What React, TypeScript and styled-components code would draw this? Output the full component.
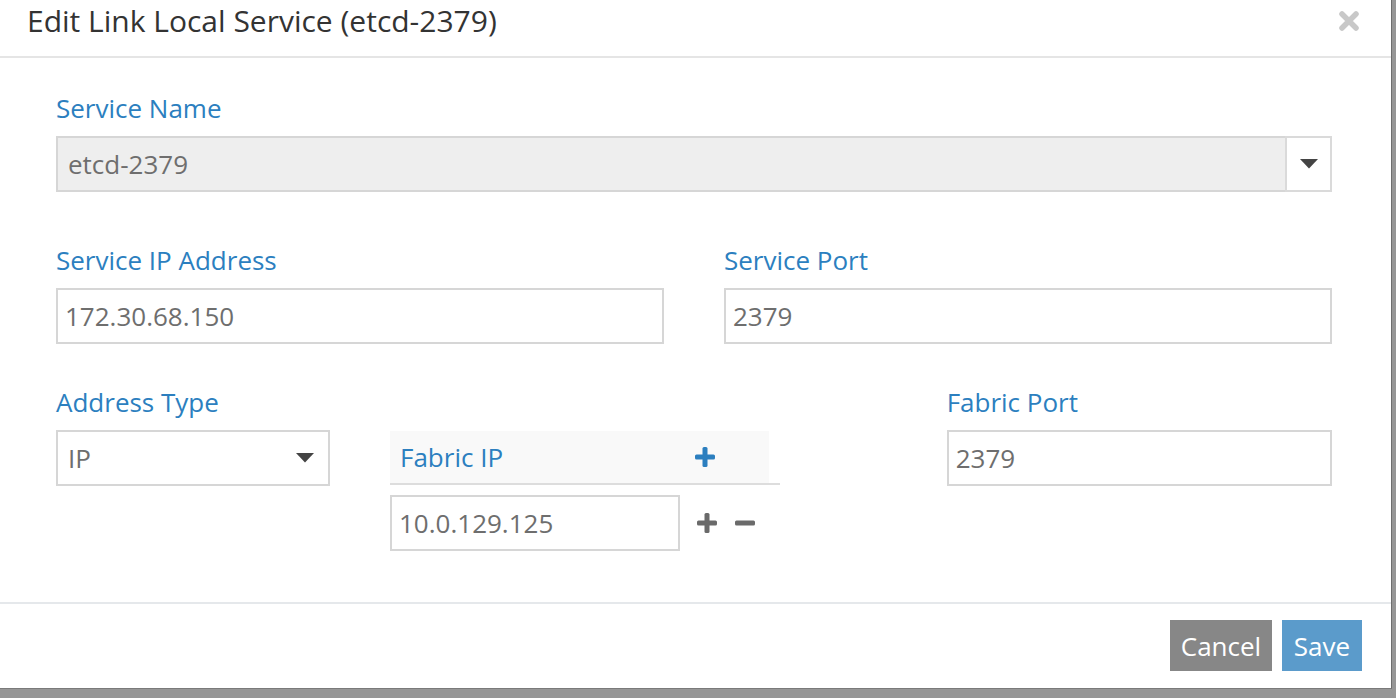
import React from "react";
import styled, { createGlobalStyle } from "styled-components";

const GlobalStyle = createGlobalStyle`
  html, body { margin: 0; padding: 0; }
  body {
    background: #969696;
    font-family: "Open Sans", "Liberation Sans", sans-serif;
    overflow: hidden;
    width: 1396px;
    height: 698px;
  }
  * { box-sizing: border-box; }
`;

const Modal = styled.div`
  width: 1392px;
  height: 689px;
  background: #ffffff;
  border-right: 1px solid #6e6e6e;
  border-bottom: 1px solid #7a7a7a;
  display: flex;
  flex-direction: column;
`;

const Header = styled.div`
  height: 58px;
  flex: none;
  border-bottom: 2px solid #e5e5e5;
  display: flex;
  align-items: flex-start;
  justify-content: space-between;
  padding: 0 30px 0 27px;
`;

const Title = styled.h4`
  margin: 0;
  font-size: 30px;
  line-height: 42px;
  font-weight: 400;
  color: #333333;
`;

const Close = styled.button`
  border: 0;
  background: transparent;
  padding: 0;
  margin-top: 9px;
  width: 24px;
  height: 24px;
  display: flex;
  align-items: center;
  justify-content: center;
  cursor: pointer;
`;

const Body = styled.div`
  flex: 1;
  padding: 33px 59px 0 56px;
  display: grid;
  grid-template-columns: repeat(12, 1fr);
  column-gap: 60px;
  align-content: start;
`;

const Group = styled.div<{ $span: number; $mt?: number; $pt?: number }>`
  grid-column: span ${(p) => p.$span};
  margin-top: ${(p) => p.$mt ?? 0}px;
  padding-top: ${(p) => p.$pt ?? 0}px;
  display: flex;
  flex-direction: column;
  align-items: stretch;
`;

const Label = styled.label`
  font-size: 26px;
  line-height: 34px;
  color: #2c7fbf;
  margin-bottom: 11px;
`;

const Input = styled.div<{ $disabled?: boolean }>`
  height: 56px;
  border: 2px solid #d6d6d6;
  background: ${(p) => (p.$disabled ? "#eeeeee" : "#ffffff")};
  font-size: 26px;
  color: #6e6e6e;
  display: flex;
  align-items: center;
  padding: 0 7px;
`;

const SelectWrap = styled.div`
  display: flex;
  height: 56px;
`;

const SelectField = styled(Input)`
  flex: 1;
  padding-left: 10px;
  border-right: 0;
`;

const SelectToggle = styled.div`
  width: 47px;
  flex: none;
  border: 2px solid #dadada;
  background: #ffffff;
  display: flex;
  align-items: center;
  justify-content: center;
`;

const Select = styled(Input)`
  justify-content: space-between;
  padding: 0 14px 0 10px;
`;

const Table = styled.div`
  width: 390px;
  display: flex;
  flex-direction: column;
`;

const TableHead = styled.div`
  height: 54px;
  border-bottom: 2px solid #dddddd;
  display: flex;
  align-items: stretch;
`;

const HeadCell = styled.div<{ $w: number; $pl: number }>`
  width: ${(p) => p.$w}px;
  background: #f9f9f9;
  display: flex;
  align-items: center;
  padding-left: ${(p) => p.$pl}px;
  font-size: 26px;
  color: #2c7fbf;
`;

const TableRow = styled.div`
  display: flex;
  align-items: center;
  margin-top: 10px;
`;

const RowInput = styled(Input)`
  width: 290px;
`;

const RowActions = styled.div`
  display: flex;
  align-items: center;
  gap: 18px;
  margin-left: 17px;
`;

const Footer = styled.div`
  height: 86px;
  flex: none;
  border-top: 2px solid #e5e8eb;
  display: flex;
  justify-content: flex-end;
  align-items: flex-start;
  padding: 16px 29px 0 0;
  gap: 10px;
`;

const Button = styled.button<{ $bg: string; $w: number }>`
  height: 51px;
  width: ${(p) => p.$w}px;
  border: 0;
  background: ${(p) => p.$bg};
  color: #ffffff;
  font-family: "Open Sans", "Liberation Sans", sans-serif;
  font-size: 26px;
  padding: 0;
  cursor: pointer;
`;

const Caret = () => (
  <svg width="18" height="10" viewBox="0 0 18 10">
    <path d="M0 0 H18 L9 9.5 Z" fill="#444" />
  </svg>
);

const Plus = ({ color }: { color: string }) => (
  <svg width="20" height="20" viewBox="0 0 20 20">
    <rect x="7.5" y="0" width="5" height="20" rx="1.5" fill={color} />
    <rect x="0" y="7.5" width="20" height="5" rx="1.5" fill={color} />
  </svg>
);

const Minus = ({ color }: { color: string }) => (
  <svg width="20" height="20" viewBox="0 0 20 20">
    <rect x="0" y="7.5" width="20" height="5" rx="1.5" fill={color} />
  </svg>
);

const CloseIcon = () => (
  <svg width="22" height="22" viewBox="0 0 22 22">
    <path
      d="M4 4 L18 18 M18 4 L4 18"
      stroke="#c8c8c8"
      strokeWidth="5.5"
      strokeLinecap="round"
    />
  </svg>
);

export default function App() {
  return (
    <>
      <GlobalStyle />
      <Modal>
        <Header>
          <Title>Edit Link Local Service (etcd-2379)</Title>
          <Close aria-label="Close">
            <CloseIcon />
          </Close>
        </Header>
        <Body>
          <Group $span={12}>
            <Label>Service Name</Label>
            <SelectWrap>
              <SelectField $disabled>etcd-2379</SelectField>
              <SelectToggle>
                <Caret />
              </SelectToggle>
            </SelectWrap>
          </Group>
          <Group $span={6} $mt={51}>
            <Label>Service IP Address</Label>
            <Input>172.30.68.150</Input>
          </Group>
          <Group $span={6} $mt={51}>
            <Label>Service Port</Label>
            <Input>2379</Input>
          </Group>
          <Group $span={3} $mt={41}>
            <Label>Address Type</Label>
            <Select>
              <span>IP</span>
              <Caret />
            </Select>
          </Group>
          <Group $span={5} $mt={41} $pt={46}>
            <Table>
              <TableHead>
                <HeadCell $w={290} $pl={10}>Fabric IP</HeadCell>
                <HeadCell $w={89} $pl={15}>
                  <Plus color="#2c7fbf" />
                </HeadCell>
              </TableHead>
              <TableRow>
                <RowInput>10.0.129.125</RowInput>
                <RowActions>
                  <Plus color="#6a6a6a" />
                  <Minus color="#6a6a6a" />
                </RowActions>
              </TableRow>
            </Table>
          </Group>
          <Group $span={4} $mt={41}>
            <Label>Fabric Port</Label>
            <Input>2379</Input>
          </Group>
        </Body>
        <Footer>
          <Button $bg="#878787" $w={102}>Cancel</Button>
          <Button $bg="#5b9bcb" $w={80}>Save</Button>
        </Footer>
      </Modal>
    </>
  );
}
